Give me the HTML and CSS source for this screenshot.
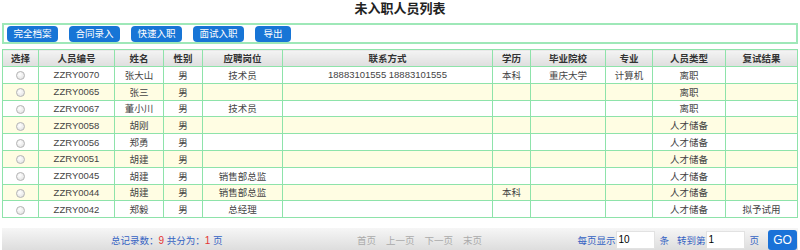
FILE: index.html
```html
<!DOCTYPE html>
<html lang="zh-cn">

<head>
    <meta charset="UTF-8">
    <meta name="viewport" content="width=device-width, initial-scale=1.0">
    <title>未入职人员列表</title>
    <link rel="stylesheet" href="styles.css">
</head>

<body>
    <div class="page">
        <h1 class="title">未入职人员列表</h1>
        <div class="toolbar">
            <a class="btn" href="#">完全档案</a>
            <a class="btn" href="#">合同录入</a>
            <a class="btn" href="#">快速入职</a>
            <a class="btn" href="#">面试入职</a>
            <a class="btn btn-short" href="#">导出</a>
        </div>
        <table class="list">
            <colgroup>
                <col style="width:36px">
                <col style="width:76px">
                <col style="width:49px">
                <col style="width:39px">
                <col style="width:80px">
                <col style="width:210px">
                <col style="width:38px">
                <col style="width:75px">
                <col style="width:47px">
                <col style="width:73px">
                <col>
            </colgroup>
            <thead>
                <tr>
                    <th>选择</th>
                    <th>人员编号</th>
                    <th>姓名</th>
                    <th>性别</th>
                    <th>应聘岗位</th>
                    <th>联系方式</th>
                    <th>学历</th>
                    <th>毕业院校</th>
                    <th>专业</th>
                    <th>人员类型</th>
                    <th>复试结果</th>
                </tr>
            </thead>
            <tbody>
                <tr>
                    <td><span class="radio"></span></td>
                    <td>ZZRY0070</td>
                    <td>张大山</td>
                    <td>男</td>
                    <td>技术员</td>
                    <td>18883101555 18883101555</td>
                    <td>本科</td>
                    <td>重庆大学</td>
                    <td>计算机</td>
                    <td>离职</td>
                    <td></td>
                </tr>
                <tr>
                    <td><span class="radio"></span></td>
                    <td>ZZRY0065</td>
                    <td>张三</td>
                    <td>男</td>
                    <td></td>
                    <td></td>
                    <td></td>
                    <td></td>
                    <td></td>
                    <td>离职</td>
                    <td></td>
                </tr>
                <tr>
                    <td><span class="radio"></span></td>
                    <td>ZZRY0067</td>
                    <td>董小川</td>
                    <td>男</td>
                    <td>技术员</td>
                    <td></td>
                    <td></td>
                    <td></td>
                    <td></td>
                    <td>离职</td>
                    <td></td>
                </tr>
                <tr>
                    <td><span class="radio"></span></td>
                    <td>ZZRY0058</td>
                    <td>胡刚</td>
                    <td>男</td>
                    <td></td>
                    <td></td>
                    <td></td>
                    <td></td>
                    <td></td>
                    <td>人才储备</td>
                    <td></td>
                </tr>
                <tr>
                    <td><span class="radio"></span></td>
                    <td>ZZRY0056</td>
                    <td>郑勇</td>
                    <td>男</td>
                    <td></td>
                    <td></td>
                    <td></td>
                    <td></td>
                    <td></td>
                    <td>人才储备</td>
                    <td></td>
                </tr>
                <tr>
                    <td><span class="radio"></span></td>
                    <td>ZZRY0051</td>
                    <td>胡建</td>
                    <td>男</td>
                    <td></td>
                    <td></td>
                    <td></td>
                    <td></td>
                    <td></td>
                    <td>人才储备</td>
                    <td></td>
                </tr>
                <tr>
                    <td><span class="radio"></span></td>
                    <td>ZZRY0045</td>
                    <td>胡建</td>
                    <td>男</td>
                    <td>销售部总监</td>
                    <td></td>
                    <td></td>
                    <td></td>
                    <td></td>
                    <td>人才储备</td>
                    <td></td>
                </tr>
                <tr>
                    <td><span class="radio"></span></td>
                    <td>ZZRY0044</td>
                    <td>胡建</td>
                    <td>男</td>
                    <td>销售部总监</td>
                    <td></td>
                    <td>本科</td>
                    <td></td>
                    <td></td>
                    <td>人才储备</td>
                    <td></td>
                </tr>
                <tr>
                    <td><span class="radio"></span></td>
                    <td>ZZRY0042</td>
                    <td>郑毅</td>
                    <td>男</td>
                    <td>总经理</td>
                    <td></td>
                    <td></td>
                    <td></td>
                    <td></td>
                    <td>人才储备</td>
                    <td>拟予试用</td>
                </tr>
            </tbody>
        </table>
        <div class="pager">
            <div class="stat">总记录数：<span class="num">9</span> 共分为：<span class="num">1</span> 页</div>
            <div class="links">
                <a href="#">首页</a>
                <a href="#">上一页</a>
                <a href="#">下一页</a>
                <a href="#">末页</a>
            </div>
            <div class="jump">
                每页显示<input class="box" type="text" value="10">条
                <span class="goto">转到第</span><input class="box" type="text" value="1">页
                <button class="go">GO</button>
            </div>
        </div>
    </div>
</body>

</html>
```

FILE: styles.css
```css
* {
    margin: 0;
    padding: 0;
    box-sizing: border-box;
}

body {
    font-family: "Liberation Sans", "Noto Sans CJK SC", sans-serif;
    font-size: 9.5px;
    color: #333;
    background-color: #fff;
}

.page {
    padding: 0 2px;
}

.title {
    height: 23px;
    line-height: 17px;
    text-align: center;
    font-size: 13px;
    font-weight: bold;
    color: #222;
}

.toolbar {
    display: flex;
    align-items: center;
    gap: 11px;
    height: 21px;
    padding-left: 3px;
    border: 2px solid #9ee8b8;
}

.btn {
    display: block;
    width: 51px;
    height: 16px;
    line-height: 16px;
    text-align: center;
    color: #fff;
    font-size: 9.5px;
    text-decoration: none;
    background-color: #1775d6;
    border-radius: 4px;
}

.btn-short {
    width: 36px;
}

.list {
    width: 100%;
    margin-top: 5px;
    border-collapse: collapse;
    table-layout: fixed;
}

.list th,
.list td {
    border: 1px solid #8ee3aa;
    text-align: center;
    white-space: nowrap;
    overflow: hidden;
}

.list th {
    height: 17px;
    font-weight: bold;
    color: #333;
    background: linear-gradient(#f4f4f4, #dedede);
}

.list td {
    height: 16.8px;
    color: #444;
}

.list tbody tr:nth-child(even) td {
    background-color: #fffde3;
}

.radio {
    display: inline-block;
    width: 9px;
    height: 9px;
    vertical-align: middle;
    border: 1px solid #b5b5b5;
    border-radius: 50%;
    background: radial-gradient(circle at 40% 35%, #fff, #ddd);
}

.pager {
    display: flex;
    align-items: center;
    height: 23px;
    margin-top: 10px;
    background: linear-gradient(#f6f6f6, #dcdcdc);
    font-size: 9.5px;
}

.stat {
    width: 355px;
    padding-left: 109px;
    color: #3563c3;
}

.stat .num {
    color: #e53333;
    font-size: 10px;
}

.links {
    display: flex;
    gap: 10px;
}

.links a {
    color: #aaa;
    text-decoration: none;
}

.jump {
    display: flex;
    align-items: center;
    margin-left: auto;
    color: #3563c3;
}

.box {
    width: 39px;
    height: 18px;
    margin: 0 4px 0 1px;
    padding-left: 1px;
    border: 1px solid #e2e2e2;
    background-color: #fff;
    font-family: "Liberation Sans", sans-serif;
    font-size: 10px;
    color: #000;
    outline: none;
}

.goto {
    margin-left: 8px;
}

.go {
    width: 29px;
    height: 20px;
    margin-left: 9px;
    margin-right: 1px;
    border: none;
    border-radius: 3px;
    background-color: #1a72d8;
    color: #fff;
    font-family: "Liberation Sans", sans-serif;
    font-size: 12px;
}
```
